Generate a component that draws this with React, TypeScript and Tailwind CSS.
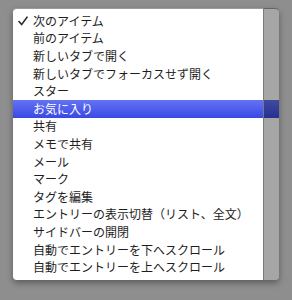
const items = [
  "次のアイテム",
  "前のアイテム",
  "新しいタブで開く",
  "新しいタブでフォーカスせず開く",
  "スター",
  "お気に入り",
  "共有",
  "メモで共有",
  "メール",
  "マーク",
  "タグを編集",
  "エントリーの表示切替（リスト、全文）",
  "サイドバーの開閉",
  "自動でエントリーを下へスクロール",
  "自動でエントリーを上へスクロール",
];

const CHECKED = 0;
const SELECTED = 5;

export default function App() {
  return (
    <div className="w-[292px] h-[300px] bg-[#8e8e8e] pt-[8px] pl-[13px] overflow-hidden">
      <div
        className="relative w-[266px] h-[272px] bg-white rounded-[4px] border-t border-[#9a9a9a] py-[3px] shadow-[0_3px_6px_rgba(0,0,0,0.35)]"
        style={{ fontFamily: '"Noto Sans CJK JP", "Noto Sans", sans-serif' }}
      >
        {items.map((label, i) => (
          <div
            key={label}
            className={
              "relative flex items-center h-[17.6px] pl-[20px] text-[12px] leading-none whitespace-nowrap " +
              (i === SELECTED
                ? "bg-gradient-to-b from-[#6572f5] to-[#3a48e4] text-white"
                : "text-[#1e1e1e]")
            }
          >
            {i === CHECKED && (
              <svg
                viewBox="0 0 10 10"
                className="absolute left-[5px] top-[4px] w-[10px] h-[10px]"
              >
                <path
                  d="M1 5.6 L3.6 8.6 L9 1.2"
                  fill="none"
                  stroke="#2a2a2a"
                  strokeWidth="1.6"
                  strokeLinecap="round"
                  strokeLinejoin="round"
                />
              </svg>
            )}
            {label}
          </div>
        ))}
        {/* dimmed strip on the right edge */}
        <div className="absolute top-[-1px] right-0 bottom-0 w-[16px] bg-black/35 rounded-r-[4px] border-l border-[#7a7a7a]" />
      </div>
    </div>
  );
}
